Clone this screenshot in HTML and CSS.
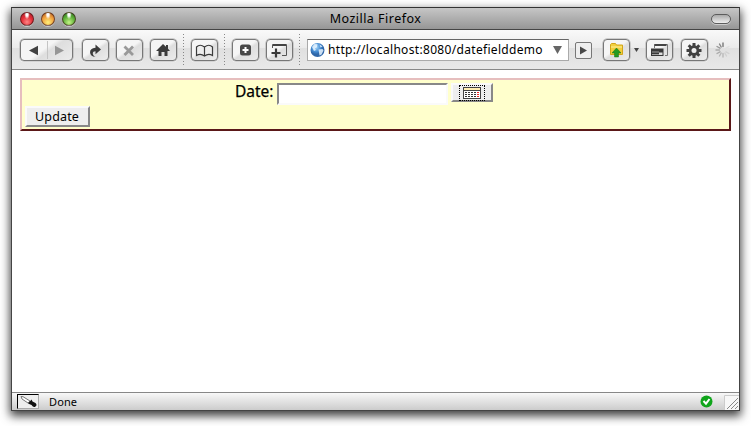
FILE: index.html
```html
<!DOCTYPE html>
<html lang="en">
<head>
<meta charset="utf-8">
<title>Mozilla Firefox</title>
<link rel="stylesheet" href="styles.css">
</head>
<body>
<main class="window">
  <header class="titlebar">
    <div class="lights"><i class="light red"></i><i class="light amber"></i><i class="light green"></i></div>
    <span class="title">Mozilla Firefox</span>
    <i class="pill"></i>
  </header>
  <nav class="toolbar">
    <div class="btn history">
      <svg width="51" height="20" viewBox="0 0 51 20"><path d="M8 10.500l9-4.700v9.400z" fill="#414141"/><path d="M43 10.500l-9-4.700v9.400z" fill="#969696"/><path d="M26.500 1v18" stroke="#c4c4c4"/></svg>
    </div>
    <div class="btn reload"><svg width="25" height="20" viewBox="0 0 25 20"><path d="M12.500 17C5.500 16.500 5 7.700 12.500 7.700V4.500L18 9.500L12.500 14.200V11.300C9 11.300 8.800 15 12.500 17z" fill="#3b3b3b"/></svg></div>
    <div class="btn stop"><svg width="25" height="20" viewBox="0 0 25 20"><path d="M7.500 6.500l8.500 8.500M16 6.500L7.500 15" stroke="#999" stroke-width="2.800"/></svg></div>
    <div class="btn home"><svg width="25" height="20" viewBox="0 0 25 20"><path d="M12 4l3 2.800V5h2v3.700L19 11h-2.500v5H13.500v-4h-3v4H7.500v-5H5z" fill="#3b3b3b"/></svg></div>
    <i class="divider d1"></i>
    <div class="btn book"><svg width="25" height="20" viewBox="0 0 25 20"><path d="M4.500 15.500V7Q8 3.500 12.500 7Q17 3.500 20.500 7v8.500Q16.500 13 12.500 16Q8.500 13 4.500 15.500zM12.500 7v9" fill="#eee" stroke="#3b3b3b" stroke-width="1.200"/></svg></div>
    <i class="divider d2"></i>
    <div class="btn plus"><svg width="25" height="20" viewBox="0 0 25 20"><rect x="7" y="4.500" width="11" height="11" rx="2.500" fill="#484848"/><path d="M9.500 10h6M12.500 7v6" stroke="#fff" stroke-width="2"/></svg></div>
    <div class="btn tab"><svg width="25" height="20" viewBox="0 0 25 20"><path d="M5.500 8V4.500h14v11H15" fill="none" stroke="#555"/><path d="M6 5h13" stroke="#444" stroke-width="2"/><path d="M4.500 13h9M9 8.500v9" stroke="#383838" stroke-width="2.200"/></svg></div>
    <i class="divider d3"></i>
    <div class="url">
      <svg width="16" height="16" viewBox="0 0 16 16"><defs><radialGradient id="g" cx=".4" cy=".3"><stop stop-color="#a9d8fb"/><stop offset=".65" stop-color="#438bd2"/><stop offset="1" stop-color="#2f66a8"/></radialGradient></defs><circle cx="7.500" cy="8" r="7" fill="url(#g)"/><path d="M2 5L4.500 2l3 .3L7 5L5 6.500L6 8L4 9z M8.500 7.500l4-.5 1 1.500-2 4-2 1-.5-3z M9.500 2.500l3 2-2 1z" fill="#e7f4ff" opacity=".85"/></svg>
      <span>http://localhost:8080/datefielddemo</span>
      <svg class="drop" width="9" height="8"><path d="M0 0h9L4.500 8z" fill="#666"/></svg>
    </div>
    <div class="go"><svg width="9" height="9"><path d="M1 .5v8l7-4z" fill="#484848"/></svg></div>
    <div class="btn folder"><svg width="25" height="20" viewBox="0 0 25 20"><path d="M6.500 14.500v-10l1-1h4l1 1.500h6v9.500z" fill="#f2cf3d" stroke="#d2a51b"/><path d="M7 7h11" stroke="#fff09b"/><path d="M12.500 8l4.500 5h-2.500v4h-4v-4H8z" fill="#259a21" stroke="#167315" stroke-width=".5"/></svg></div>
    <svg class="mini" width="5" height="4"><path d="M0 0h5L2.500 4z" fill="#444"/></svg>
    <div class="btn windows"><svg width="25" height="20" viewBox="0 0 25 20"><path d="M7.500 8V4.500h13v11H18" fill="none" stroke="#777"/><path d="M7.500 5h12" stroke="#444" stroke-width="2"/><rect x="4" y="8.500" width="12.500" height="7.500" fill="#383838"/><path d="M5 12h7M5 14.500h7" stroke="#bbb" stroke-width=".8"/><path d="M12 12.500h3.500v2.500H12z" fill="#ddd"/></svg></div>
    <div class="btn gear"><svg width="25" height="20" viewBox="0 0 25 20"><g stroke="#414141" stroke-width="3"><path d="M12 3v15M4.500 10.500h15M6.700 5.200l10.600 10.600M17.300 5.200L6.700 15.800"/></g><circle cx="12" cy="10.500" r="5.300" fill="#414141"/><circle cx="12" cy="10.500" r="2.500" fill="#eee"/></svg></div>
    <svg class="spinner" width="16" height="16" viewBox="-8 -8 16 16" stroke-width="1.400" stroke-linecap="round"><path d="M0-3.500V-7" stroke="#777"/><path d="M-1.800-3l-1.700-3" stroke="#888"/><path d="M-3-1.800l-3-1.700" stroke="#999"/><path d="M-3.500 0H-7M-3 1.800l-3 1.700" stroke="#aaa"/><path d="M-1.800 3l-1.700 3M0 3.500V7" stroke="#b8b8b8"/><path d="M1.800 3l1.700 3M3 1.800l3 1.700" stroke="#d0d0d0"/><path d="M3.500 0H7M3-1.800l3-1.700" stroke="#dfdfdf"/></svg>
  </nav>
  <section class="page">
    <form class="panel">
      <div class="row"><label for="date">Date:</label><input id="date" type="text"><button class="cal" type="button" aria-label="Calendar"><span class="focus"><svg width="18" height="12" shape-rendering="crispEdges"><path d="M.5.5h17v11H.5z" fill="#fff" stroke="#444"/><path d="M1 1h16v2H1z" fill="#ffedb0"/><path d="M1 3.500h16" stroke="#444"/><path d="M2 5.500h12M2 7.500h12M2 9.500h12" stroke="#333" stroke-dasharray="2 1"/><path d="M14 5.500h2M14 7.500h2M14 9.500h2" stroke="#e22"/></svg></span></button></div>
      <button class="update" type="button">Update</button>
    </form>
  </section>
  <footer class="status">
    <span class="picker"><svg width="20" height="13" viewBox="0 0 20 13"><path d="M3 1.500l2 .2 7 4.300-2 2L4 4z" fill="#fff" stroke="#777"/><path d="M10 8.500l3.500-4 1 2 3 1.500q2 2 0 3.500t-4-1.500z" fill="#111"/></svg></span>
    <span class="done">Done</span>
    <svg class="ok" width="13" height="13" viewBox="0 0 13 13"><circle cx="6.500" cy="6.500" r="6" fill="#10a51b"/><path d="M3.500 6l2.500 2.700L9.500 4" fill="none" stroke="#fff" stroke-width="2"/></svg>
    <svg class="grip" width="15" height="15" viewBox="0 0 15 15"><path d="M0 0h15v15H0z" fill="#f7f7f7"/><path d="M.5 15V.5H15" fill="none" stroke="#ccc"/><path d="M3 14L14 3M7 14l7-7M11 14l3-3" stroke="#888"/></svg>
  </footer>
</main>
</body>
</html>
```
FILE: styles.css
```css
* { box-sizing: border-box; }
body {
  margin: 0;
  padding: 7px 0 0 11px;
  height: 426px;
  overflow: hidden;
  background: #fff;
  color: #000;
  font-family: "Noto Sans", "Open Sans", sans-serif;
}
svg { display: block; flex: none; }
.window {
  width: 729px;
  height: 404px;
  display: flex;
  flex-direction: column;
  border: 1px solid #444;
  border-top-color: #333;
  background: #fff;
  box-shadow: 0 4px 9px 1px rgba(0,0,0,.75);
}
.titlebar {
  height: 22px;
  flex: none;
  display: flex;
  align-items: center;
  justify-content: space-between;
  padding: 0 8px;
  background: linear-gradient(#c6c6c6, #969696);
  border-bottom: 1px solid #444;
}
.lights { display: flex; gap: 7px; width: 76px; }
.light {
  width: 14px;
  height: 14px;
  border-radius: 50%;
  border: 1px solid rgba(60,20,20,.65);
  box-shadow: 0 1px 0 #ccc;
}
.red { background: radial-gradient(ellipse at 50% 12%, #fff 0 12%, transparent 32%), radial-gradient(circle at 50% 75%, #ff8585, #e22d37 50%, #a7202a); }
.amber { background: radial-gradient(ellipse at 50% 12%, #fff 0 12%, transparent 32%), radial-gradient(circle at 50% 78%, #fff07b, #ef9d3c 55%, #a75a20); }
.green { background: radial-gradient(ellipse at 50% 12%, #fff 0 12%, transparent 32%), radial-gradient(circle at 50% 78%, #c4f385, #59ac35 55%, #276e20); }
.title { font-size: 12.5px; line-height: 20px; letter-spacing: .48px; white-space: nowrap; }
.pill {
  width: 20px;
  height: 10px;
  margin-left: 56px;
  border: 1px solid #5c5c5c;
  border-radius: 5px;
  background: linear-gradient(#aaa, #eee);
  box-shadow: 0 1px 0 #ccc;
}
.toolbar {
  height: 40px;
  flex: none;
  display: flex;
  align-items: center;
  padding-left: 8px;
  background: linear-gradient(#f9f9f9, #ebebeb 46%, #e0e0e0 47%, #e8e8e8);
  border-bottom: 1px solid #888;
}
.btn {
  width: 27px;
  height: 22px;
  flex: none;
  display: flex;
  align-items: center;
  justify-content: center;
  border: 1px solid #777;
  border-radius: 4px;
  background: linear-gradient(145deg, #f5f5f5 0 45%, #dedede 55%, #ececec);
  box-shadow: 0 0 0 .5px #aaa, 0 1px 1px #fff;
}
.history { width: 53px; }
.reload { margin-left: 9px; }
.stop, .home { margin-left: 7px; }
.divider {
  width: 1px;
  height: 32px;
  flex: none;
  background: repeating-linear-gradient(#888 0 1px, transparent 1px 3px);
}
.d1 { margin: 0 7px 0 6px; }
.d2 { margin: 0 7px 0 6px; }
.tab { margin-left: 7px; }
.d3 { margin: 0 7px 0 6px; }
.url {
  width: 262px;
  height: 22px;
  flex: none;
  display: flex;
  align-items: center;
  padding: 0 6px 0 2px;
  border: 1px solid #aaa;
  border-top-color: #666;
  background: #fff;
}
.url span { margin-left: 2px; font-size: 12px; line-height: 18px; letter-spacing: .32px; white-space: nowrap; }
.drop { margin-left: auto; }
.go {
  width: 17px;
  height: 17px;
  margin-left: 6px;
  margin-top: 2px;
  flex: none;
  display: flex;
  align-items: center;
  justify-content: center;
  border: 1px solid #777;
  border-radius: 2px;
  background: #eee;
}
.folder { margin-left: 11px; }
.mini { margin-left: 4px; }
.windows { margin-left: 7px; }
.gear { margin-left: 8px; }
.spinner { margin-left: 7px; }
.page { flex: 1; padding: 8px 8px 0 8px; }
.panel {
  height: 53px;
  border: 2px solid;
  border-color: #e6bebe #5b1818 #5b1818 #e6bebe;
  background: #ffffcc;
  padding: 3px;
}
.row { display: flex; align-items: flex-start; height: 23px; padding-left: 210px; }
.row label { width: 42px; font-size: 15.5px; line-height: 17px; white-space: nowrap; -webkit-text-stroke: .25px #000; }
.row input {
  width: 171px;
  height: 22px;
  margin: 0;
  padding: 0;
  border: 2px solid;
  border-color: #888 #fafafa #fafafa #888;
  border-radius: 0;
  background: #fff;
}
button {
  margin: 0;
  padding: 0;
  border: 2px solid;
  border-color: #fafafa #888 #888 #fafafa;
  border-radius: 0;
  background: #eee;
  font-family: inherit;
  color: #000;
}
.cal { width: 42px; height: 19px; margin-left: 3px; display: flex; justify-content: center; align-items: center; }
.focus { width: 26px; height: 16px; flex: none; display: flex; align-items: center; justify-content: center; border: 1px dotted #000; }
.update { display: block; width: 65px; height: 21px; padding-right: 1px; font-size: 12.5px; line-height: 17px; letter-spacing: .15px; }
.status {
  height: 18px;
  flex: none;
  display: flex;
  align-items: center;
  padding-left: 5px;
  border-top: 1px solid #888;
  background: linear-gradient(#f8f8f8, #ccc);
}
.picker { width: 22px; height: 15px; border: 1px solid #aaa; border-top-color: #000; border-left-color: #000; background: #eee; }
.done { margin-left: 10px; font-size: 11px; line-height: 16px; letter-spacing: .1px; }
.ok { margin-left: auto; margin-right: 11px; }
.grip { margin-top: 2px; }
```
